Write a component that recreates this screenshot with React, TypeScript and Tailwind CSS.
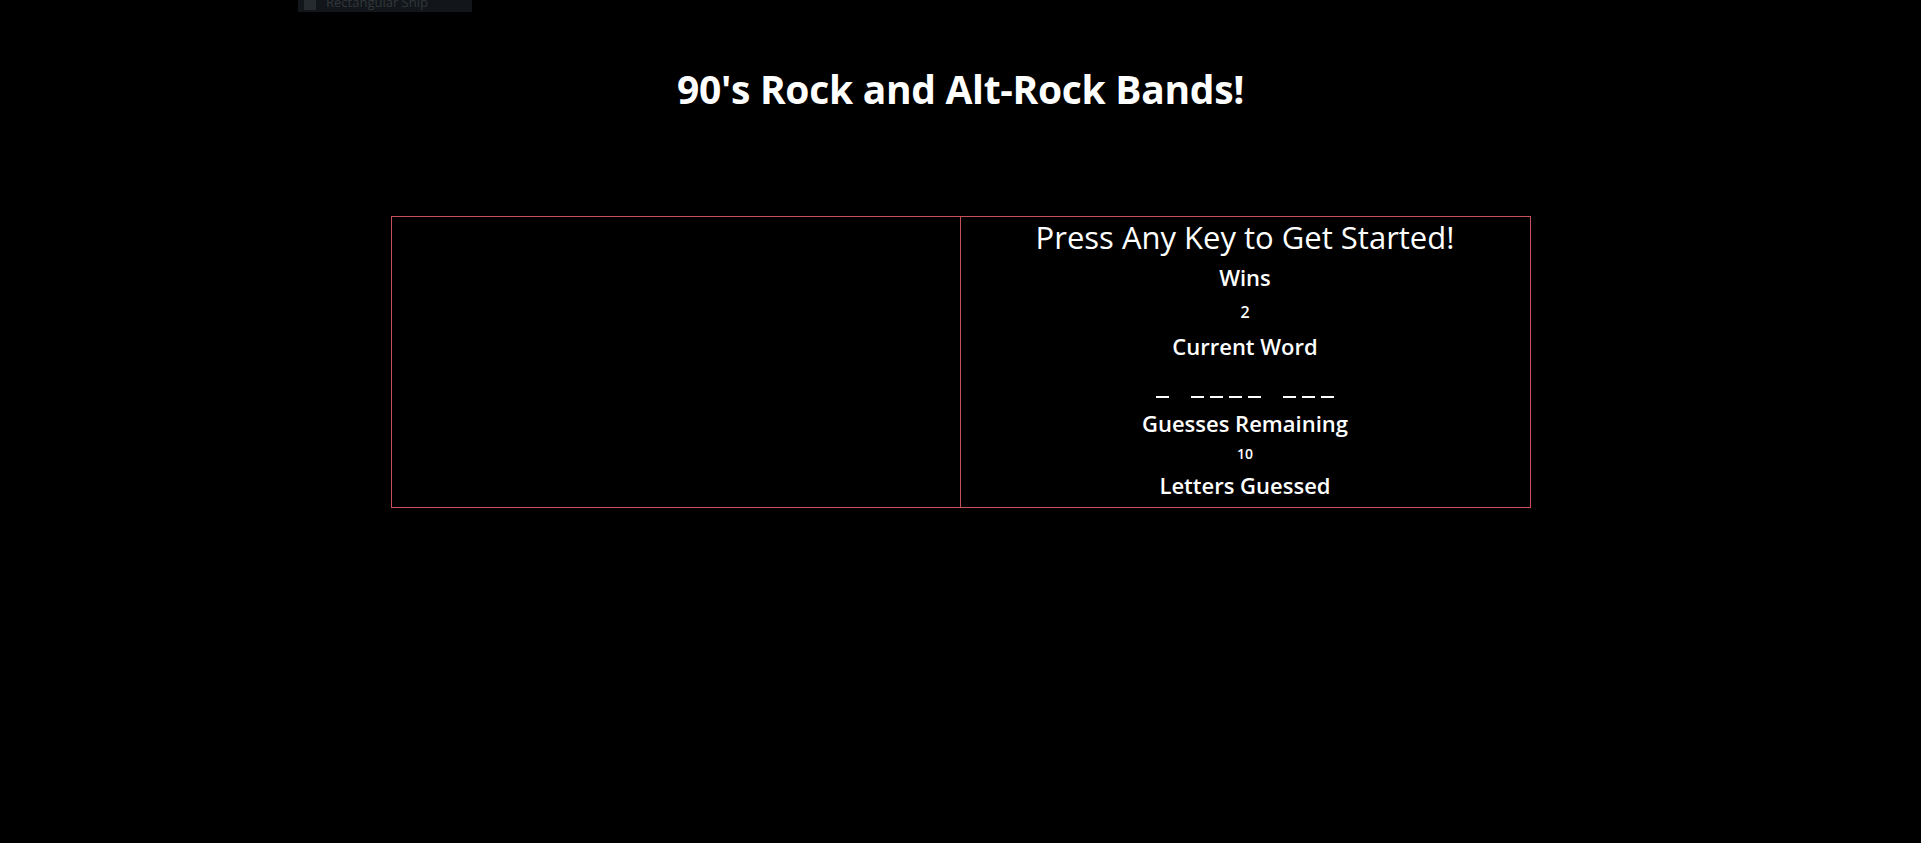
export default function App() {
  const word = [1, 4, 3];

  return (
    <div className="min-h-[843px] w-full bg-black text-white font-['Open_Sans','Noto_Sans',sans-serif]">
      <div className="relative">
        <div className="absolute left-[298px] top-0 h-[12px] w-[174px] overflow-hidden bg-[#12161a]">
          <div className="flex items-end gap-[10px] pl-[6px] -mt-[6px]">
            <div className="h-[10px] w-[12px] bg-[#262b30]" />
            <span className="text-[13px] leading-[16px] text-[#31363b]">Rectangular Snip</span>
          </div>
        </div>
      </div>

      <div className="pt-[65px] text-center">
        <h1 className="text-[39px] leading-[48px] font-bold tracking-[-0.3px]">90's Rock and Alt-Rock Bands!</h1>
      </div>

      <div className="mx-auto mt-[103px] grid w-[1140px] grid-cols-2 border border-[#c9505a]">
        <div className="h-[290px] border-r border-[#c9505a]" />
        <div className="flex flex-col items-center text-center">
          <h2 className="mt-[1px] text-[31px] leading-[38px] font-medium">Press Any Key to Get Started!</h2>
          <h4 className="mt-[7px] text-[22px] leading-[29px] font-semibold">Wins</h4>
          <div className="mt-[8px] text-[16px] leading-[24px] font-semibold">2</div>
          <h4 className="mt-[8px] text-[22px] leading-[29px] font-semibold">Current Word</h4>
          <div className="mt-[11px] flex h-[29px] items-end gap-[22px] pb-[3px]">
            {word.map((n, i) => (
              <div key={i} className="flex gap-[6px]">
                {Array.from({ length: n }).map((_, j) => (
                  <span key={j} className="block h-[2px] w-[13px] bg-white" />
                ))}
              </div>
            ))}
          </div>
          <h4 className="mt-[8px] text-[22px] leading-[29px] font-semibold">Guesses Remaining</h4>
          <div className="mt-[4px] text-[14px] leading-[24px] font-semibold">10</div>
          <h4 className="mt-[5px] text-[22px] leading-[29px] font-semibold">Letters Guessed</h4>
        </div>
      </div>
    </div>
  );
}
